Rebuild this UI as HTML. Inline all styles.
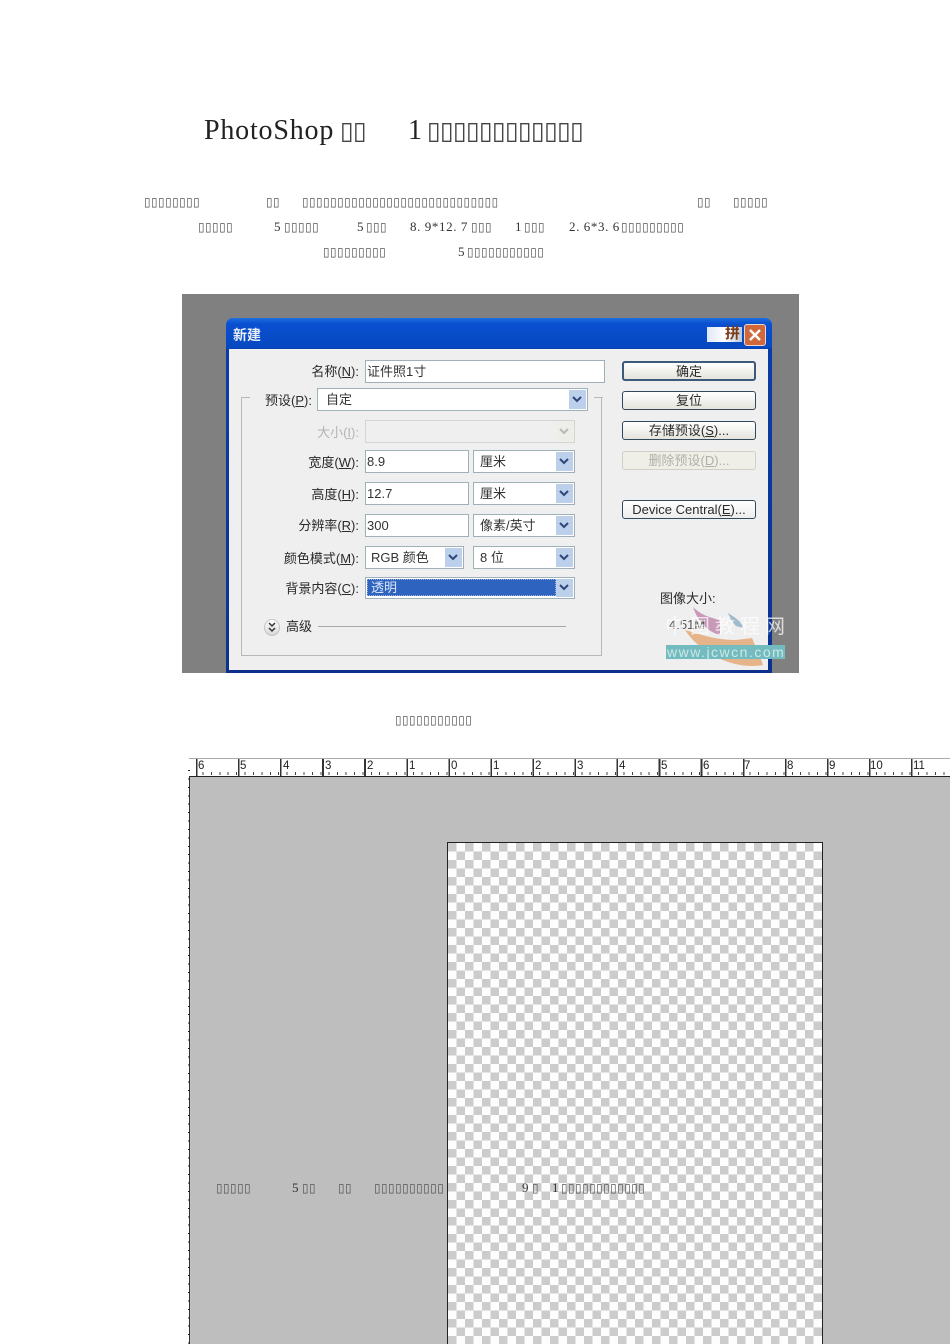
<!DOCTYPE html>
<html lang="zh"><head><meta charset="utf-8"><title>PhotoShop</title>
<style>
html,body{margin:0;padding:0;background:#fff}
body{position:relative;width:950px;height:1344px;overflow:hidden;font-family:"Liberation Sans","Noto Sans CJK SC",sans-serif}
.a{position:absolute;white-space:nowrap}
.t{position:absolute;white-space:nowrap;font-family:"DejaVu Sans",sans-serif;font-size:12px;letter-spacing:.42px;line-height:14px;height:14px;color:#555}
.n{position:absolute;white-space:nowrap;font-family:"Liberation Serif",serif;font-size:13px;letter-spacing:.6px;line-height:14px;color:#333}
.tt{position:absolute;white-space:nowrap;font-family:"DejaVu Sans",sans-serif;font-size:25px;letter-spacing:-.75px;line-height:30px;color:#444}
.ts{position:absolute;white-space:nowrap;font-family:"Liberation Serif",serif;font-size:28px;line-height:30px;color:#222}
#shot{position:absolute;left:182px;top:294px;width:617px;height:379px;background:#808080;overflow:hidden;filter:blur(.3px)}
.d{position:absolute;white-space:nowrap;font-size:13px;line-height:16px;color:#2a2a2a}
.lab{text-align:right;right:440px}
.u{text-decoration:underline}
.f{position:absolute;box-sizing:border-box;background:#fff;border:1px solid #9fb0b8;font-size:13px;line-height:22px;color:#333;padding-left:1px;white-space:nowrap}
.ar{position:absolute;right:1px;top:1px;bottom:1px;width:17px;background:#bcd0ec}
.ar svg{position:absolute;left:3px;top:50%;margin-top:-4px}
.b{position:absolute;left:440px;width:134px;box-sizing:border-box;border:1px solid #34485c;border-radius:3px;background:linear-gradient(#fff,#e4e4dc);text-align:center;font-size:13px;line-height:18px;color:#2a2a2a;white-space:nowrap}
</style></head><body>

<div class="ts" style="left:204px;top:116px;letter-spacing:.8px">PhotoShop</div>
<div class="tt" style="left:340px;top:116px">▯▯</div>
<div class="ts" style="left:408px;top:116px">1</div>
<div class="tt" style="left:427px;top:116px">▯▯▯▯▯▯▯▯▯▯▯▯</div>

<div class="t" style="left:144px;top:195px">▯▯▯▯▯▯▯▯</div>
<div class="t" style="left:266px;top:195px">▯▯</div>
<div class="t" style="left:302px;top:195px">▯▯▯▯▯▯▯▯▯▯▯▯▯▯▯▯▯▯▯▯▯▯▯▯▯▯▯▯</div>
<div class="t" style="left:697px;top:195px">▯▯</div>
<div class="t" style="left:733px;top:195px">▯▯▯▯▯</div>

<div class="t" style="left:198px;top:220px">▯▯▯▯▯</div>
<div class="n" style="left:274px;top:220px">5</div>
<div class="t" style="left:284px;top:220px">▯▯▯▯▯</div>
<div class="n" style="left:357px;top:220px">5</div>
<div class="t" style="left:366px;top:220px">▯▯▯</div>
<div class="n" style="left:410px;top:220px">8. 9*12. 7</div>
<div class="t" style="left:471px;top:220px">▯▯▯</div>
<div class="n" style="left:515px;top:220px">1</div>
<div class="t" style="left:524px;top:220px">▯▯▯</div>
<div class="n" style="left:569px;top:220px">2. 6*3. 6</div>
<div class="t" style="left:621px;top:220px">▯▯▯▯▯▯▯▯▯</div>

<div class="t" style="left:323px;top:245px">▯▯▯▯▯▯▯▯▯</div>
<div class="n" style="left:458px;top:245px">5</div>
<div class="t" style="left:467px;top:245px">▯▯▯▯▯▯▯▯▯▯▯</div>

<div id="shot">
  <div style="position:absolute;left:44px;top:24px;width:546px;height:355px;background:linear-gradient(#1c6ee0 0,#0a4fd0 6px,#0548c0 30px,#0a3ca8 31px,#0a3290 100%);border-radius:7px 7px 0 0"></div>
  <div style="position:absolute;left:47px;top:55px;width:539px;height:321px;background:#efefef"></div>
  <div style="position:absolute;left:44px;top:376px;width:546px;height:3px;background:#0c2f8c"></div>
  <div class="d" style="left:51px;top:33px;color:#e8eef8;font-weight:700;font-size:14px">新建</div>
  <div style="position:absolute;left:525px;top:33px;width:35px;height:15px;background:linear-gradient(90deg,#dfe8f4,#fff 50%,#bcc8d8)"></div>
  <div class="d" style="left:543px;top:32px;font-size:15px;font-weight:700;color:#7a3a18">拼</div>
  <div style="position:absolute;left:562px;top:30px;width:22px;height:22px;box-sizing:border-box;border:1px solid #e8d8d0;border-radius:3px;background:#d0683c"><svg width="20" height="20" style="display:block"><path d="M5 5L15 15M15 5L5 15" stroke="#fff" stroke-width="2.4" fill="none"/></svg></div>

  <div style="position:absolute;left:59px;top:103px;width:361px;height:259px;box-sizing:border-box;border:1px solid #b8b8b8;border-top:0"></div>
  <div style="position:absolute;left:59px;top:103px;width:9px;height:1px;background:#b8b8b8"></div>
  <div style="position:absolute;left:412px;top:103px;width:9px;height:1px;background:#b8b8b8"></div>

  <div class="d lab" style="top:70px;right:440px">名称(<span class="u">N</span>):</div>
  <div class="d lab" style="top:99px;right:487px">预设(<span class="u">P</span>):</div>
  <div class="d lab" style="top:131px;color:#b4b4b4">大小(<span class="u">I</span>):</div>
  <div class="d lab" style="top:161px">宽度(<span class="u">W</span>):</div>
  <div class="d lab" style="top:193px">高度(<span class="u">H</span>):</div>
  <div class="d lab" style="top:224px">分辨率(<span class="u">R</span>):</div>
  <div class="d lab" style="top:257px">颜色模式(<span class="u">M</span>):</div>
  <div class="d lab" style="top:287px">背景内容(<span class="u">C</span>):</div>

  <div class="f" style="left:183px;top:66px;width:240px;height:23px">证件照1寸</div>
  <div class="f" style="left:135px;top:94px;width:271px;height:23px;padding-left:8px">自定<div class="ar"><svg width="10" height="8"><path d="M1 1L5 5L9 1" stroke="#2c4878" stroke-width="2" fill="none"/></svg></div></div>
  <div class="f" style="left:183px;top:126px;width:210px;height:23px;background:#efefef;border-color:#d4d4d0"><div class="ar" style="background:#eeeee8"><svg width="10" height="8"><path d="M1 1L5 5L9 1" stroke="#b8b8b8" stroke-width="2" fill="none"/></svg></div></div>
  <div class="f" style="left:183px;top:156px;width:104px;height:23px">8.9</div>
  <div class="f" style="left:291px;top:156px;width:102px;height:23px;padding-left:6px">厘米<div class="ar"><svg width="10" height="8"><path d="M1 1L5 5L9 1" stroke="#2c4878" stroke-width="2" fill="none"/></svg></div></div>
  <div class="f" style="left:183px;top:188px;width:104px;height:23px">12.7</div>
  <div class="f" style="left:291px;top:188px;width:102px;height:23px;padding-left:6px">厘米<div class="ar"><svg width="10" height="8"><path d="M1 1L5 5L9 1" stroke="#2c4878" stroke-width="2" fill="none"/></svg></div></div>
  <div class="f" style="left:183px;top:220px;width:104px;height:23px">300</div>
  <div class="f" style="left:291px;top:220px;width:102px;height:23px;padding-left:6px">像素/英寸<div class="ar"><svg width="10" height="8"><path d="M1 1L5 5L9 1" stroke="#2c4878" stroke-width="2" fill="none"/></svg></div></div>
  <div class="f" style="left:183px;top:252px;width:99px;height:23px;padding-left:5px">RGB 颜色<div class="ar"><svg width="10" height="8"><path d="M1 1L5 5L9 1" stroke="#2c4878" stroke-width="2" fill="none"/></svg></div></div>
  <div class="f" style="left:291px;top:252px;width:102px;height:23px;padding-left:6px">8 位<div class="ar"><svg width="10" height="8"><path d="M1 1L5 5L9 1" stroke="#2c4878" stroke-width="2" fill="none"/></svg></div></div>
  <div class="f" style="left:183px;top:283px;width:210px;height:22px"><div style="position:absolute;left:1px;top:1px;width:189px;height:17px;box-sizing:border-box;background:#2e64c0;border:1px dotted #9fb4d8;color:#dbe6f8;line-height:15px;padding-left:3px">透明</div><div class="ar"><svg width="10" height="8"><path d="M1 1L5 5L9 1" stroke="#2c4878" stroke-width="2" fill="none"/></svg></div></div>

  <div style="position:absolute;left:82px;top:325px;width:16px;height:17px;border-radius:50%;background:linear-gradient(#fff,#d8d8d8);border:1px solid #c4c4c4;box-sizing:border-box"><svg width="14" height="15" style="display:block"><path d="M4 3L7 6L10 3M4 8L7 11L10 8" stroke="#333" stroke-width="1.5" fill="none"/></svg></div>
  <div class="d" style="left:104px;top:325px">高级</div>
  <div style="position:absolute;left:136px;top:332px;width:248px;height:1px;background:#a8a8a8"></div>

  <div class="b" style="top:67px;height:20px;border:2px solid #3c5a7c;line-height:17px">确定</div>
  <div class="b" style="top:97px;height:19px">复位</div>
  <div class="b" style="top:127px;height:19px">存储预设(<span class="u">S</span>)...</div>
  <div class="b" style="top:157px;height:19px;border-color:#d0d0c8;background:#efefe8;color:#b0b0a8">删除预设(<span class="u">D</span>)...</div>
  <div class="b" style="top:206px;height:19px;background:linear-gradient(#fff,#ececec)">Device Central(<span class="u">E</span>)...</div>

  <div class="d" style="left:478px;top:297px">图像大小:</div>

  <svg style="position:absolute;left:470px;top:300px" width="147" height="79">
    <path d="M33 36C48 40 62 46 84 46L100 44C104 54 108 62 111 71C85 76 50 62 33 36Z" fill="#e6b48a"/>
    <path d="M41 13C50 22 60 24 68 26L68 41C56 38 46 28 41 13Z" fill="#c89ab8"/>
    <path d="M76 19C84 24 90 28 91 34L84 32C80 28 78 24 76 19Z" fill="#a0bccc"/>
    <rect x="14" y="51" width="119" height="14" fill="#72bcc0"/>
  </svg>
  <div class="d" style="left:487px;top:323px;color:#555">4.51M</div>
  <div class="d" style="left:483px;top:320px;font-size:20px;line-height:26px;letter-spacing:5px;color:#fff;opacity:.72">中国教程网</div>
  <div class="d" style="left:485px;top:350px;font-size:14px;letter-spacing:1.5px;color:#cfe6e6;line-height:16px">www.jcwcn.com</div>
</div>

<div class="t" style="left:395px;top:713px">▯▯▯▯▯▯▯▯▯▯▯</div>

<!-- ruler -->
<div style="position:absolute;left:189px;top:758px;width:761px;height:1px;background:#aaa"></div>
<div style="position:absolute;left:190px;top:759px;width:760px;height:17px;background:repeating-linear-gradient(90deg,transparent 0,transparent 7.42px,#444 7.42px,#444 8.42px) 5px 13px/100% 3px no-repeat,#fff"></div>
<div style="position:absolute;left:189px;top:776px;width:761px;height:1px;background:#222"></div>
<div style="position:absolute;left:190px;top:759px;width:760px;height:17px;background:repeating-linear-gradient(90deg,#333 0,#333 1.6px,transparent 1.6px,transparent 42.06px) 5.5px 0 no-repeat;background-size:800px 17px"></div>
<div class="a" style="left:0;top:760px;width:950px;height:17px;font-size:11.5px;line-height:13px;color:#222">
<span class="a" style="left:198px">6</span><span class="a" style="left:240px">5</span><span class="a" style="left:283px">4</span><span class="a" style="left:325px">3</span><span class="a" style="left:367px">2</span><span class="a" style="left:409px">1</span><span class="a" style="left:451px">0</span><span class="a" style="left:493px">1</span><span class="a" style="left:535px">2</span><span class="a" style="left:577px">3</span><span class="a" style="left:619px">4</span><span class="a" style="left:661px">5</span><span class="a" style="left:703px">6</span><span class="a" style="left:744px">7</span><span class="a" style="left:787px">8</span><span class="a" style="left:829px">9</span><span class="a" style="left:870px">10</span><span class="a" style="left:913px">11</span>
</div>

<!-- workspace -->
<div style="position:absolute;left:190px;top:777px;width:760px;height:567px;background:#bebebe"></div>
<div style="position:absolute;left:189px;top:776px;width:1px;height:568px;background:#333"></div>
<div style="position:absolute;left:188px;top:770px;width:2px;height:574px;background:repeating-linear-gradient(180deg,#222 0,#222 1px,transparent 1px,transparent 8.42px)"></div>

<!-- canvas -->
<div style="position:absolute;left:447px;top:842px;width:376px;height:502px;box-sizing:border-box;border:1px solid #222;border-bottom:0;background-color:#fff;background-image:conic-gradient(#fdfdfd 25%,#ccc 25% 50%,#fdfdfd 50% 75%,#ccc 75%);background-size:17px 17px"></div>

<div class="t" style="left:216px;top:1181px">▯▯▯▯▯</div>
<div class="n" style="left:292px;top:1181px">5</div>
<div class="t" style="left:302px;top:1181px">▯▯</div>
<div class="t" style="left:338px;top:1181px">▯▯</div>
<div class="t" style="left:374px;top:1181px">▯▯▯▯▯▯▯▯▯▯</div>
<div class="n" style="left:522px;top:1181px">9</div>
<div class="t" style="left:532px;top:1181px">▯</div>
<div class="n" style="left:552px;top:1181px">1</div>
<div class="t" style="left:561px;top:1181px">▯▯▯▯▯▯▯▯▯▯▯▯</div>
</body></html>
